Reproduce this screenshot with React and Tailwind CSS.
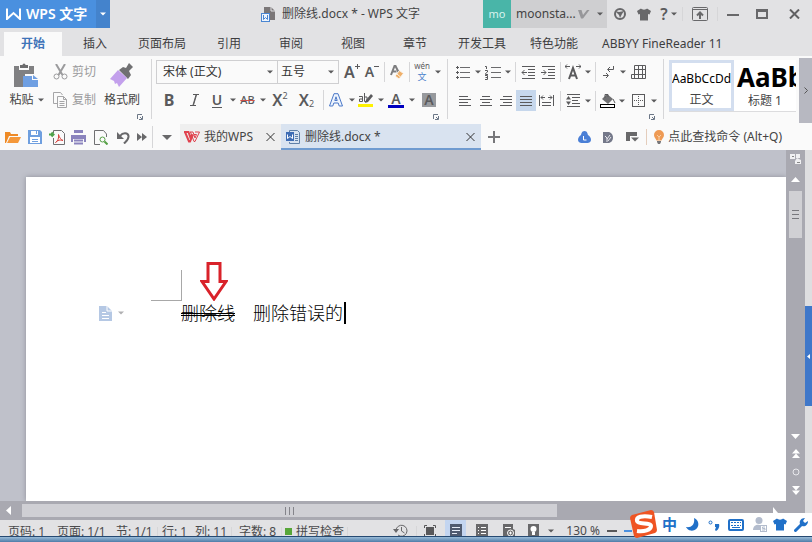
import { useState } from 'react'

const TABS = ['插入', '页面布局', '引用', '审阅', '视图', '章节', '开发工具', '特色功能']

function Svg({ w = 16, h = 16, className = '', children }) {
  return (
    <svg width={w} height={h} viewBox={`0 0 ${w} ${h}`} fill="none" className={`shrink-0 ${className}`} aria-hidden="true">
      {children}
    </svg>
  )
}

function Caret({ className = 'text-[#5a5a5c]' }) {
  return (
    <Svg w={6} h={4} className={className}>
      <path d="M0 0.5h6L3 3.5z" fill="currentColor" />
    </Svg>
  )
}

function Tool({ label, className = 'w-5', children }) {
  return (
    <button type="button" aria-label={label} title={label} className={`flex h-[21px] shrink-0 items-center justify-center text-[#5a5a5c] ${className}`}>
      {children}
    </button>
  )
}

function Drop({ label, className = 'w-[11px]' }) {
  return (
    <Tool label={`${label}选项`} className={className}>
      <Caret />
    </Tool>
  )
}

function Sep({ className = 'h-5' }) {
  return <div className={`w-px shrink-0 bg-[#d6d6d8] ${className}`} />
}

function Launcher({ label }) {
  return (
    <button type="button" aria-label={label} className="mr-2 flex h-[6px] shrink-0 items-center self-end">
      <Svg w={6} h={6}>
        <path d="M0.5 5V0.5H5M5.5 2v3.5H2M3 3l2 2" stroke="#6b7686" />
      </Svg>
    </button>
  )
}

function Lines({ rows }) {
  return (
    <Svg w={14} h={12}>
      {rows.map(([x, w], i) => (
        <rect key={i} x={x} y={1 + i * 3} width={w} height="1" fill="#5a5a5c" />
      ))}
    </Svg>
  )
}

function Shirt({ className }) {
  return (
    <Svg w={14} h={13} className={className}>
      <path d="M4 0.5C5 2 9 2 10 0.5L14 3l-1.500 3.500L11 6v6.500H3V6l-1.500 0.500L0 3z" fill="currentColor" />
    </Svg>
  )
}

function TitleBar() {
  return (
    <header className="flex h-7 shrink-0 items-center">
      <button type="button" className="flex h-full w-24 shrink-0 items-center bg-[#4a90df] pl-[6px] text-sm font-semibold whitespace-nowrap text-white">
        <Svg w={15} h={12} className="mr-[5px]">
          <path d="M1 0.500V11L7.500 5L14 11V0.500" stroke="white" strokeWidth="2" />
        </Svg>
        WPS 文字
      </button>
      <button type="button" aria-label="主菜单" className="flex h-full w-[14px] shrink-0 items-center justify-center bg-[#4483cc]">
        <Caret className="text-white" />
      </button>
      <div className="mr-[63px] ml-auto flex items-center gap-[6px] text-xs whitespace-nowrap text-[#444]">
        <Svg w={15} h={15}>
          <path d="M3 0h7l4 4v9H3z" fill="#7b7778" />
          <path d="M10 0v4h4" stroke="#e2e2e4" />
          <rect x="0.5" y="6.500" width="8" height="8" fill="#eef4fc" stroke="#4a86d2" />
          <path d="M2.500 8v4.500l2-2 2 2V8" stroke="#4a86d2" />
        </Svg>
        删除线.docx * - WPS 文字
      </div>
      <div className="flex h-full w-7 shrink-0 items-center justify-center bg-[#49b5a8] text-[11px] text-[#d8f3ee]">mo</div>
      <button type="button" className="flex h-full w-24 shrink-0 items-center bg-[#cfcfd1] pl-[5px] text-xs text-[#444]">
        moonsta...
        <Svg w={12} h={10} className="ml-[2px]">
          <path d="M0 1h3.500L5 6l4-5h2.500L5 9.500H3z" fill="#97979a" />
        </Svg>
        <span className="mr-[2px] ml-auto w-2"><Caret /></span>
      </button>
      <Tool label="浏览器" className="w-[26px]">
        <Svg w={12} h={12}>
          <circle cx="6" cy="6" r="5" stroke="#68686a" strokeWidth="2" />
          <path d="M1 3l4 1 5-1-2 3-2 4-1-3z" fill="#68686a" />
        </Svg>
      </Tool>
      <Tool label="皮肤" className="w-[22px]"><Shirt className="text-[#68686a]" /></Tool>
      <Tool label="帮助" className="w-[27px]">
        <span className="mr-[3px] text-base font-semibold">?</span>
        <Caret />
      </Tool>
      <Sep className="h-[14px] bg-[#b8b8ba]" />
      <Tool label="隐藏功能区" className="w-[34px]">
        <Svg w={16} h={14}>
          <rect x="0.5" y="0.5" width="15" height="13" rx="1" stroke="#68686a" />
          <path d="M1 2.500h14" stroke="#68686a" />
          <path d="M8 12V6M5 8.500l3-3 3 3" stroke="#68686a" strokeWidth="2" />
        </Svg>
      </Tool>
      <Sep className="h-[14px] bg-[#b8b8ba]" />
      <Tool label="最小化" className="w-[30px]"><Svg w={12} h={4}><rect y="2" width="12" height="2" fill="#68686a" /></Svg></Tool>
      <Tool label="最大化" className="w-7"><Svg w={12} h={10}><path d="M1 2v7h10V2z" stroke="#68686a" strokeWidth="2" /><path d="M0 1.500h12" stroke="#68686a" strokeWidth="3" /></Svg></Tool>
      <Tool label="关闭" className="w-9"><Svg w={11} h={10}><path d="M1 0.500l9 9M10 0.500l-9 9" stroke="#606062" strokeWidth="2" /></Svg></Tool>
    </header>
  )
}

function MenuTabs() {
  return (
    <nav className="flex h-7 shrink-0 items-end text-xs text-[#3d3d3f]">
      <button type="button" className="mr-[2px] ml-1 h-6 w-[58px] shrink-0 bg-[#fafafa] font-semibold text-[#3f74b8]">开始</button>
      {TABS.map((t) => (
        <button type="button" key={t} className={`h-6 shrink-0 ${t.length > 2 ? 'w-[72px]' : 'w-[62px]'}`}>{t}</button>
      ))}
      <button type="button" className="h-6 shrink-0 px-3 whitespace-nowrap">ABBYY FineReader 11</button>
    </nav>
  )
}

function Clipboard() {
  return (
    <section className="flex h-full w-[151px] shrink-0 flex-col">
      <div className="flex h-14 text-xs text-[#444]">
        <button type="button" className="flex w-[53px] flex-col items-center pt-[5px]">
          <Svg w={25} h={25}>
            <path d="M0 3h5v4h10V3h5v8h-9v13H0z" fill="#808082" />
            <path d="M6 2h2.500a1.500 1.500 0 0 1 3 0H14v3H6z" fill="#6c6c6e" />
            <path d="M9 13h9v4h6v7H9z" fill="#6f9fe2" />
            <path d="M19 12l5 4h-5z" fill="#6f9fe2" />
          </Svg>
          <span className="mt-1 flex items-center gap-1 whitespace-nowrap">粘贴<Caret /></span>
        </button>
        <div className="flex w-[47px] flex-col text-[#9a9a9c]">
          <button type="button" className="flex h-7 items-center gap-[3px] whitespace-nowrap">
            <Svg w={16} h={16}>
              <path d="M3 0l6.500 11M12 0L5.500 11" stroke="#9b9b9d" strokeWidth="2" />
              <circle cx="3.500" cy="12.500" r="2.500" stroke="#9b9b9d" />
              <circle cx="11.500" cy="12.500" r="2.500" stroke="#9b9b9d" />
            </Svg>
            剪切
          </button>
          <button type="button" className="flex h-7 items-center gap-[3px] whitespace-nowrap">
            <Svg w={16} h={16}>
              <path d="M4 11.500H0.500V0.500h7L9.500 3" stroke="#a5a5a7" />
              <path d="M4.500 4.500h6l3 3v8h-9z" stroke="#a5a5a7" />
              <path d="M10.500 4.500v3h3M6.500 9.500h5M6.500 11.500h5M6.500 13.500h5" stroke="#a5a5a7" />
            </Svg>
            复制
          </button>
        </div>
        <button type="button" className="flex w-11 flex-col items-center pt-[5px]">
          <Svg w={24} h={25}>
            <path d="M19 0l4 4-4 4 2 4-3 4L9 7l4-3 3 1z" fill="#707072" />
            <path d="M8 7l9 8-8 9-2-4-2 1-1-3-4-2z" fill="#c3a0ec" />
          </Svg>
          <span className="mt-1 whitespace-nowrap">格式刷</span>
        </button>
      </div>
      <Launcher label="剪贴板" />
    </section>
  )
}

function FontGroup() {
  return (
    <section className="flex h-full w-[295px] shrink-0 flex-col text-xs">
      <div className="flex h-7 items-center pl-1">
        <div className="flex h-6 w-[122px] shrink-0 items-center border border-[#cfcfd1] pr-1 pl-[6px]">
          <select aria-label="字体" className="min-w-0 flex-1 appearance-none text-[#333]"><option>宋体 (正文)</option></select>
          <Caret />
        </div>
        <div className="-ml-px flex h-6 w-[62px] shrink-0 items-center border border-[#cfcfd1] pr-1 pl-[3px]">
          <select aria-label="字号" className="min-w-0 flex-1 appearance-none text-[#333]"><option>五号</option></select>
          <Caret />
        </div>
        <Tool label="增大字号" className="ml-[3px] w-5"><span className="text-base font-semibold">A</span><Svg w={5} h={5} className="mb-3"><path d="M2.500 0v5M0 2.500h5" stroke="#5a5a5c" /></Svg></Tool>
        <Tool label="减小字号"><span className="text-sm font-semibold">A</span><Svg w={5} h={5} className="mb-3"><path d="M0 2.500h5" stroke="#5a5a5c" /></Svg></Tool>
        <Sep className="mx-[2px] h-5" />
        <Tool label="清除格式">
          <Svg w={14} h={16}>
            <path d="M1 11L4.500 2h1L9 9M2.500 7.500h4" stroke="#7d7d7f" strokeWidth="2" />
            <path d="M9.500 6.500l4 3-4.500 5.500-4-3z" fill="#efb06b" stroke="#faf6f0" />
            <path d="M7 10l3.500 3" stroke="#fff3e0" />
          </Svg>
        </Tool>
        <Sep className="mx-[2px] h-5" />
        <Tool label="拼音指南">
          <span className="flex flex-col items-center">
            <span className="text-[8px] leading-[10px]">wén</span>
            <span className="text-[9px] leading-[12px] text-[#4b83cc]">文</span>
          </span>
        </Tool>
        <Drop label="拼音指南" />
      </div>
      <div className="flex h-7 items-center pl-1">
        <Tool label="加粗" className="w-[26px]"><span className="text-base font-bold">B</span></Tool>
        <Tool label="倾斜" className="w-[25px]"><Svg w={9} h={12}><path d="M3 0.500h6M0 11.500h6M6 1L3 11" stroke="#5a5a5c" /><path d="M6.500 1L3.500 11" stroke="#5a5a5c" /></Svg></Tool>
        <Tool label="下划线"><span className="border-b border-[#5a5a5c] text-sm leading-[14px] font-semibold">U</span></Tool>
        <Drop label="下划线" />
        <Tool label="删除线" className="w-[19px]"><span className="text-[11px] font-medium line-through decoration-[#d0504a] decoration-1">AB</span></Tool>
        <Drop label="删除线" />
        <Tool label="上标" className="w-6"><span className="text-base font-semibold">X</span><span className="mb-2 text-[9px]">2</span></Tool>
        <Tool label="下标" className="w-[29px]"><span className="text-base font-semibold">X</span><span className="mt-2 text-[9px]">2</span></Tool>
        <Sep className="mx-[2px] h-5" />
        <Tool label="文字效果">
          <Svg w={14} h={14}>
            <path d="M0.500 13L5 0.700h4L13.500 13h-3.300l-1-3H4.800l-1 3zM5.800 7.500h2.400L7 3.800z" stroke="#4b78c8" fill="#eef4fd" />
          </Svg>
        </Tool>
        <Drop label="文字效果" />
        <Tool label="突出显示" className="w-[18px]">
          <Svg w={16} h={15}>
            <path d="M1 3.500h3.500v5H1.500V6H4M6.500 0v8.500H9v-4.500H6.500" stroke="#5a5a5c" />
            <path d="M13 1l2 2-5 6-3 1 1-3z" fill="#5a5a5c" />
            <rect y="11" width="15" height="3" fill="#fff200" />
          </Svg>
        </Tool>
        <Drop label="突出显示" />
        <Tool label="字体颜色">
          <span className="border-b-3 border-[#0000c0] px-[3px] text-sm leading-[13px] font-semibold">A</span>
        </Tool>
        <Drop label="字体颜色" />
        <Tool label="字符底纹" className="w-6"><span className="w-[14px] bg-[#97999d] text-sm leading-[14px] font-semibold">A</span></Tool>
      </div>
      <Launcher label="字体" />
    </section>
  )
}

function ParagraphGroup() {
  return (
    <section className="flex h-full w-[215px] shrink-0 flex-col">
      <div className="flex h-7 items-center">
        <Tool label="项目符号" className="ml-[5px] w-5">
          <Svg w={14} h={13}><path d="M4 1.500h10M4 6.500h10M4 11.500h10" stroke="#6b6b6d" /><path d="M0 1.500h3M1.500 0v3M0 6.500h3M1.500 5v3M0 11.500h3M1.500 10v3" stroke="#5a5a5c" /></Svg>
        </Tool>
        <Drop label="项目符号" className="w-[10px]" />
        <Tool label="编号">
          <Svg w={16} h={15}>
            <path d="M6 2.500h10M6 7.500h10M6 12.500h10" stroke="#6b6b6d" />
            <path d="M0 1.500h1.500V4M0 5.500h2.500v1.500L0.500 8.500v1H3M0 10.500h2.500v4H0M0.500 12.500h2" stroke="#5a5a5c" />
          </Svg>
        </Tool>
        <Drop label="编号" className="w-[9px]" />
        <Sep className="mr-[2px] ml-[3px] h-5" />
        <Tool label="减少缩进"><Svg w={14} h={13}><path d="M1 0.500h13M7 3.500h7M7 6.500h7M7 9.500h7M1 12.500h13M1 6.500h5M3.500 4L1 6.500 3.500 9" stroke="#5a5a5c" /></Svg></Tool>
        <Tool label="增加缩进"><Svg w={14} h={13}><path d="M1 0.500h13M7 3.500h7M7 6.500h7M7 9.500h7M1 12.500h13M0 6.500h5M2.500 4L5 6.500 2.500 9" stroke="#5a5a5c" /></Svg></Tool>
        <Sep className="mx-[2px] h-5" />
        <Tool label="字符缩放">
          <Svg w={16} h={16}>
            <path d="M4 15L8 4l4 11M5.500 11.500h5" stroke="#5a5a5c" strokeWidth="2" />
            <path d="M0 2.500h5M2 0.500L0 2.500l2 2M11 2.500h5M14 0.500l2 2-2 2" stroke="#5a5a5c" />
          </Svg>
        </Tool>
        <Drop label="字符缩放" className="w-[9px]" />
        <Sep className="mx-[3px] h-5" />
        <Tool label="换行符">
          <Svg w={12} h={13}><path d="M10.500 0v3.500H5M7 1L4.500 3.500 7 6M0 9.500h5M3 7l2.500 2.500L3 12" stroke="#5a5a5c" /></Svg>
        </Tool>
        <Drop label="换行符" className="w-2" />
        <Tool label="插入表格" className="w-[22px]">
          <Svg w={15} h={14}><path d="M3.500 0.500h11v13H0.500V9.500h3zM3.500 4.500h11M1 9.500h13M7.500 0v14M11.500 0v14M3.500 9v4" stroke="#5a5a5c" /></Svg>
        </Tool>
      </div>
      <div className="flex h-7 items-center pt-px">
        <Tool label="左对齐" className="ml-[6px] w-[21px]"><Lines rows={[[1, 9], [1, 12], [1, 9], [1, 12]]} /></Tool>
        <Tool label="居中" className="w-[21px]"><Lines rows={[[3, 8], [1, 12], [3, 8], [1, 12]]} /></Tool>
        <Tool label="右对齐" className="w-5"><Lines rows={[[4, 9], [1, 12], [4, 9], [1, 12]]} /></Tool>
        <Tool label="两端对齐" className="w-5 bg-[#c6d7ec]"><Lines rows={[[1, 12], [1, 12], [1, 12], [1, 12]]} /></Tool>
        <Tool label="分散对齐"><Svg w={15} h={13}><path d="M0.500 1v11M14.500 1v11M2 3.500h4M9 3.500h4M4 1.500l-2 2 2 2M11 1.500l2 2-2 2M3 8.500h9M3 11.500h9" stroke="#5a5a5c" /></Svg></Tool>
        <Sep className="mr-[2px] ml-1 h-5" />
        <Tool label="行距">
          <Svg w={14} h={14}><path d="M6 3.500h8M6 6.500h6M6 9.500h8M1 12.500h13M1 0.500h13" stroke="#5a5a5c" /><path d="M2.500 2L5 5.500H0zM2.500 11L5 7.500H0z" fill="#5a5a5c" /></Svg>
        </Tool>
        <Drop label="行距" className="w-[9px]" />
        <Sep className="mx-[3px] h-5" />
        <Tool label="底纹颜色" className="w-[18px]">
          <Svg w={16} h={15}>
            <path d="M7 1l6 5-5 5-6-5z" fill="#707072" />
            <path d="M5 5V1.500h3V4M13 6l2 4" stroke="#5a5a5c" />
            <rect x="0.5" y="11.500" width="14" height="3" fill="white" stroke="black" />
          </Svg>
        </Tool>
        <Drop label="底纹颜色" className="w-[10px]" />
        <Tool label="边框" className="w-[22px]">
          <Svg w={13} h={13}><rect x="0.5" y="0.5" width="12" height="12" stroke="#5a5a5c" /><path d="M6.500 2v10M2 6.500h10" stroke="#5a5a5c" strokeDasharray="1 1" /></Svg>
        </Tool>
        <Drop label="边框" className="w-[9px]" />
      </div>
      <Launcher label="段落" />
    </section>
  )
}

function Ribbon() {
  return (
    <div className="flex h-[67px] shrink-0 bg-[#fafafa] pt-[2px]">
      <Clipboard />
      <Sep className="mt-px h-[60px]" />
      <FontGroup />
      <Sep className="mt-px h-[60px]" />
      <ParagraphGroup />
      <Sep className="mt-px h-[60px]" />
      <div className="mt-[2px] ml-[5px] flex h-[52px] min-w-0 flex-1 overflow-hidden border-b border-[#dcdcde]">
        <button type="button" className="flex w-[65px] shrink-0 flex-col items-center overflow-hidden border-3 border-[#d3deef] bg-white text-xs text-[#444]">
          <span className="mt-2 text-xs leading-4 text-black">AaBbCcDd</span>
          <span className="mt-[5px] leading-4">正文</span>
        </button>
        <button type="button" className="flex w-[62px] shrink-0 flex-col items-center overflow-hidden bg-white text-xs text-[#444]">
          <span className="mt-px ml-[3px] self-start text-[26px] leading-8 font-bold text-black">AaBb</span>
          <span className="leading-4">标题 1</span>
        </button>
      </div>
      <button type="button" aria-label="更多样式" className="ml-[3px] flex w-[13px] shrink-0 items-center justify-center bg-[#b7b8c1]">
        <Svg w={4} h={7}><path d="M0.500 0.500l3 3-3 3" stroke="#555" /></Svg>
      </button>
    </div>
  )
}

function QuickBar() {
  return (
    <div className="flex h-[27px] shrink-0 items-center bg-[#fafafa] pt-px text-xs text-[#444]">
      <Tool label="打开" className="ml-px w-[23px]">
        <Svg w={16} h={13}><path d="M0 1h5l1 2h7v2H4L1 12H0z" fill="#ee8a26" /><path d="M5 6h11l-3 6H2z" fill="#f5983a" /></Svg>
      </Tool>
      <Tool label="保存" className="w-[22px]">
        <Svg w={14} h={14}><path d="M0 0h12l2 2v12H0z" fill="#6f9fdf" /><rect x="3" y="1" width="7" height="4" fill="white" /><rect x="2" y="7" width="10" height="6" fill="white" /><path d="M4 9.500h6M4 11.500h6M8.500 1v3" stroke="#6f9fdf" /></Svg>
      </Tool>
      <Tool label="输出为PDF" className="w-[22px]">
        <Svg w={16} h={15}>
          <path d="M4.500 3V0.500h8l3 3v11h-11V8" stroke="#707072" />
          <path d="M0 4.500h4M2.500 2.500l2 2-2 2" stroke="#4ea24a" strokeWidth="2" />
          <path d="M6.500 12.500C9 11 10 8 9.500 4.500 10.500 8 12 9.500 14 10.500 11 9.500 9 10 6.500 12.500z" stroke="#d8433f" />
        </Svg>
      </Tool>
      <Tool label="打印" className="w-[21px]">
        <Svg w={15} h={15}><path d="M3 0h9v3H3zM0 5h15v7h-2V9H2v3H0z" fill="#8a83bd" /><path d="M3 10.500h9M3 13.500h9" stroke="#8a83bd" strokeWidth="2" /></Svg>
      </Tool>
      <Tool label="打印预览" className="w-6">
        <Svg w={14} h={15}><path d="M12.500 7V4l-3-3.500h-9v14H6" stroke="#707072" /><circle cx="8.500" cy="9.500" r="2.500" stroke="#56a046" /><path d="M10.500 11.500l3 3" stroke="#56a046" strokeWidth="2" /></Svg>
      </Tool>
      <Tool label="撤销">
        <Svg w={13} h={13}><path d="M3 5C6 1 11 1.500 11.500 5S9 10.500 7 12.500" stroke="#68686a" strokeWidth="2" /><path d="M0 1v7h7z" fill="#68686a" /></Svg>
      </Tool>
      <Tool label="更多" className="w-[18px]"><Svg w={10} h={8}><path d="M0 0l5 4-5 4zM5 0l5 4-5 4z" fill="#68686a" /></Svg></Tool>
      <Sep className="mx-px h-[22px]" />
      <Tool label="文档列表" className="w-[26px]"><Svg w={10} h={5}><path d="M0 0h10L5 5z" fill="#68686a" /></Svg></Tool>
      <div className="flex h-full w-[101px] shrink-0 items-center bg-[#efefef] pl-1">
        <Svg w={16} h={12} className="mr-1">
          <path d="M0 1h4.500l2 6L8 3.500M1 1l4 9.500h1L9 3.500" stroke="#e0424e" strokeWidth="2" />
          <path d="M6 1h3l2 6 1.500-3.500H10M15.500 1L11 10.500h-1L6.500 1M11 1h4.500" stroke="#e0424e" />
        </Svg>
        <button type="button">我的WPS</button>
        <button type="button" aria-label="关闭我的WPS" className="mr-[6px] ml-auto"><Svg w={9} h={8}><path d="M0.500 0l8 8M8.500 0l-8 8" stroke="#333" /></Svg></button>
      </div>
      <div className="flex h-full w-[200px] shrink-0 items-center border-b-2 border-[#6f9bd0] bg-[#d9e3f0] pt-[2px] pl-[5px]">
        <Svg w={14} h={14} className="mr-[5px]">
          <path d="M3.500 2V0.500h8l2 2v11h-10V12M9 4.500h3M9 6.500h3M9 8.500h3M9 10.500h3" stroke="#6080a8" />
          <rect y="2" width="8" height="9" fill="#3e6cb4" />
          <path d="M1.500 4.500v4l2.500-2 2.500 2v-4" stroke="white" />
        </Svg>
        <button type="button">删除线.docx *</button>
        <button type="button" aria-label="关闭文档" className="mr-[6px] ml-auto"><Svg w={9} h={8}><path d="M0.500 0l8 8M8.500 0l-8 8" stroke="#333" /></Svg></button>
      </div>
      <Tool label="新建" className="w-[26px]"><Svg w={12} h={12}><path d="M6 0v12M0 6h12" stroke="#77777a" strokeWidth="2" /></Svg></Tool>
      <div className="ml-auto flex items-center">
        <Tool label="云服务" className="w-6"><Svg w={13} h={12}><path d="M6.500 0c3 0 3 3 3.500 4 2 1 3 3 3 5s-2 3-3.500 3h-6C2 12 0 11 0 9s1-4 3-5c0.500-1 0.500-4 3.500-4z" fill="#4a7fd6" /><path d="M5.500 5v4h3" stroke="white" /></Svg></Tool>
        <Tool label="文档助手" className="w-6"><Svg w={10} h={11}><path d="M0 0h5c3 0 5 2.500 5 5.500S8 11 5 11H0z" fill="#747889" /><path d="M4 10V6L2 4M4 7l3-4M5 9l3-4" stroke="#e8e8ee" /></Svg></Tool>
        <Tool label="切换窗口" className="w-6"><Svg w={13} h={11}><path d="M0 0h11v4H4v5H0z" fill="#68686a" /><path d="M5 5.500h8l-4 4z" fill="#68686a" /></Svg></Tool>
        <Sep className="mr-[6px] ml-[2px] h-4 bg-[#e4cdbc]" />
        <Svg w={12} h={14} className="mr-[3px]"><path d="M6 0a5 5 0 0 1 5 5c0 2.500-2 3.500-2.500 5.500h-5C3 8.500 1 7.500 1 5a5 5 0 0 1 5-5z" fill="#ee9a54" /><path d="M4 5l2 2 2-2M6 7v3" stroke="#f8cfa4" /><path d="M4 11h4v1L7 14H5l-1-2z" fill="#77777a" /></Svg>
        <button type="button" className="mr-[30px] whitespace-nowrap">点此查找命令 (Alt+Q)</button>
      </div>
    </div>
  )
}

function Page() {
  return (
    <div className="mt-[27px] ml-[26px] flex min-w-0 flex-1 flex-col bg-white pt-[85px] shadow-[0_0_5px_#8f9099]">
      <div className="flex items-end pl-[125px]">
        <div className="h-[31px] w-[31px] border-r border-b border-[#a8a8a8]" />
        <Svg w={28} h={39} className="ml-[18px]">
          <path d="M8 1.500h12v18h6L14 37 2 19.500h6z" stroke="#d9222a" strokeWidth="3" />
        </Svg>
      </div>
      <div className="flex h-6 items-center pl-[72px]">
        <Tool label="粘贴选项" className="w-[14px]">
          <Svg w={13} h={15}><path d="M0 0h8l5 5v10H0z" fill="#b5c8e4" /><path d="M8 0v5h5M3 6.500h4M3 9.500h7M3 12.500h7" stroke="white" /></Svg>
        </Tool>
        <span className="ml-[6px] flex w-[63px]"><Caret className="text-[#b0b0b2]" /></span>
        <p className="flex items-center text-lg leading-[22px] font-light whitespace-pre text-black">
          <s className="decoration-black decoration-double decoration-1">删除线</s>
          <span className="border-r-2 border-black pr-px pl-[18px]">删除错误的</span>
        </p>
      </div>
    </div>
  )
}

function VerticalScroll() {
  return (
    <div className="flex w-[19px] shrink-0 flex-col items-center bg-[#a9a9b1] pt-1">
      <Svg w={12} h={11}><path d="M0 0h5v5H0zM6 0h4v4H6zM7 4l4 2v4H5V7z" fill="#f0f0f2" /><path d="M2 2.500h2M7 8.500h3" stroke="#888" /></Svg>
      <Svg w={9} h={5} className="mt-3"><path d="M0 5h9L4.500 0z" fill="white" /></Svg>
      <div className="mt-[9px] flex h-[47px] w-[13px] items-center justify-center bg-[#d0d0d4]">
        <Svg w={7} h={9}><path d="M0 0.500h7M0 4.500h7M0 8.500h7" stroke="#77777d" /></Svg>
      </div>
      <div className="mt-auto flex flex-col items-center gap-[10px] pb-[6px]">
        <Svg w={9} h={5}><path d="M0 0h9L4.500 5z" fill="white" /></Svg>
        <Svg w={8} h={9}><path d="M0 4.500h8L4 0zM0 9h8L4 4.500z" fill="white" /></Svg>
        <Svg w={8} h={8}><circle cx="4" cy="4" r="3" stroke="#e8e8ec" /></Svg>
        <Svg w={8} h={9}><path d="M0 0h8L4 4.500zM0 4.500h8L4 9z" fill="white" /></Svg>
      </div>
    </div>
  )
}

function HorizontalScroll() {
  return (
    <div className="flex h-[19px] shrink-0 items-center bg-[#a9a9b1] pl-[6px]">
      <Svg w={5} h={9}><path d="M5 0v9L0 4.500z" fill="white" /></Svg>
      <div className="ml-[11px] flex h-[13px] w-[67%] items-center justify-center bg-[#cfcfd4]">
        <Svg w={10} h={8}><path d="M0.500 0v8M4.500 0v8M8.500 0v8" stroke="#84848a" /></Svg>
      </div>
      <Svg w={7} h={8} className="mr-[25px] ml-auto"><path d="M0 0v7l5-1z" fill="white" /></Svg>
    </div>
  )
}

function StatusBar() {
  const bar = <Sep className="h-[10px] bg-[#a5a5a7]" />
  return (
    <footer className="flex h-4 shrink-0 items-start overflow-hidden bg-[#e2e2e4] text-xs text-[#4a4a4c]">
      <div className="flex shrink-0 items-center pt-[3px] pl-2 leading-[17px] whitespace-nowrap">
        <span className="w-[49px]">页码: 1</span>
        <span className="w-[59px]">页面: 1/1</span>
        <span className="w-[41px]">节: 1/1</span>
        {bar}
        <span className="ml-1 w-[33px]">行: 1</span>
        <span className="w-9">列: 11</span>
        {bar}
        <span className="ml-[7px] w-[42px]">字数: 8</span>
        {bar}
        <span className="mr-1 ml-[3px] h-[7px] w-[7px] bg-[#57a639]" />
        <span className="mr-[3px]">拼写检查</span>
        {bar}
      </div>
      <div className="mr-[180px] ml-auto flex shrink-0 items-center leading-[21px] whitespace-nowrap">
        <Tool label="历史版本" className="w-6"><Svg w={15} h={13}><path d="M3 6.500a5.500 5.500 0 1 1 2 4.500M8.500 3v4l3 2" stroke="#68686a" /><path d="M0 5h6L3 9z" fill="#68686a" /></Svg></Tool>
        <span className="mx-1">{bar}</span>
        <Tool label="全屏显示" className="w-[17px]"><Svg w={12} h={12}><path d="M0.500 3V0.500H3M9 0.500h2.500V3M0.500 9v2.500H3M9 11.500h2.500V9" stroke="#58585a" /><rect x="2" y="2" width="8" height="8" fill="#58585a" /></Svg></Tool>
        <Tool label="页面视图" className="ml-[7px] w-[21px] bg-[#c3d5f0]"><Svg w={12} h={13}><rect width="12" height="13" fill="#4f5b70" /><path d="M2 3.500h8M2 6.500h8M2 9.500h5" stroke="#e6edf8" /></Svg></Tool>
        <Tool label="大纲视图" className="ml-1 w-6"><Svg w={12} h={13}><rect width="12" height="13" fill="#68686a" /><path d="M2 3.500h1M5 3.500h5M2 6.500h1M5 6.500h5M2 9.500h1M5 9.500h5" stroke="white" /></Svg></Tool>
        <Tool label="网页视图" className="ml-[3px] w-6"><Svg w={12} h={13}><path d="M0 0h10v5l2 1v7H0z" fill="#68686a" /><path d="M2 3.500h6" stroke="white" /><circle cx="7.500" cy="9" r="3" stroke="white" /><path d="M6 9h3M7.500 7.500v3" stroke="white" /></Svg></Tool>
        <Tool label="护眼模式" className="w-6"><Svg w={11} h={13}><rect width="11" height="13" fill="#68686a" /><circle cx="5.500" cy="5" r="3" fill="white" /><rect x="4" y="8" width="3" height="3" fill="white" /></Svg></Tool>
        <Drop label="显示模式" />
        <button type="button" className="mr-[6px] ml-[10px]">130 %</button>
        <Tool label="缩小" className="w-[11px]"><Svg w={10} h={2}><rect width="10" height="2" fill="#58585a" /></Svg></Tool>
        <Svg w={8} h={2} className="ml-[7px]"><rect width="8" height="2" fill="#4a90df" /></Svg>
      </div>
    </footer>
  )
}

function InputMethodBar() {
  return (
    <div className="absolute right-0 bottom-[6px] flex h-[23px] items-center rounded-l bg-white text-[#2070c8]">
      <Svg w={30} h={30} className="-ml-3 mb-[2px]">
        <path d="M4 6L23 1q2 0 3 2l3 18q0 2-2 3L9 29q-2 0-3-2L2 9q0-2 2-3z" fill="#ef5423" />
        <path d="M24 8C14 6 8 8 9 12s14 1 14 5-7 6-14 5" stroke="white" strokeWidth="4" />
      </Svg>
      <button type="button" className="w-[23px] text-[15px] font-bold">中</button>
      <Tool label="全半角" className="w-[22px]"><Svg w={13} h={13}><path d="M8 0a6.500 6.500 0 1 1-8 9C6 10 9 6 8 0z" fill="#2070c8" /></Svg></Tool>
      <Tool label="中英文标点" className="w-[21px]"><Svg w={12} h={12}><circle cx="2.500" cy="3.500" r="1.500" stroke="#2070c8" /><path d="M7 5h4c1 3-1 6-3 7l-1-1 1-3H7z" fill="#2070c8" /></Svg></Tool>
      <Tool label="软键盘" className="w-6"><Svg w={16} h={12}><rect x="1" y="1" width="14" height="10" rx="1" stroke="#2070c8" strokeWidth="2" /><path d="M3 3.500h10M3 6.500h10" stroke="#2070c8" strokeDasharray="2 1" /><path d="M4 8.500h8" stroke="#2070c8" /></Svg></Tool>
      <Tool label="账号" className="w-[23px]"><Svg w={14} h={15}><circle cx="6" cy="3.500" r="3.500" fill="#b3bccd" /><path d="M0 13c0-7 10-7 12 0z" fill="#b3bccd" /><rect x="7.500" y="8.500" width="6" height="6" fill="white" stroke="#b3bccd" /><path d="M12 10H9.500v1.500H12V13H9" stroke="#b3bccd" /></Svg></Tool>
      <Tool label="输入法皮肤" className="w-[18px]"><Shirt className="text-[#2070c8]" /></Tool>
      <Tool label="工具箱" className="w-[23px]"><Svg w={14} h={14}><path d="M1.500 12.500L8 6" stroke="#2070c8" strokeWidth="3" strokeLinecap="round" /><path d="M11 0L9 3l2 2 3-2c0 4-3 6-6 5L6 6c-1-3 1-6 5-6z" fill="#2070c8" /></Svg></Tool>
    </div>
  )
}

export default function App() {
  const [open, setOpen] = useState(false)

  return (
    <div className="relative flex h-screen flex-col overflow-hidden bg-[#e2e2e4] font-['Noto_Sans','Noto_Sans_CJK_SC',sans-serif]">
      <TitleBar />
      <MenuTabs />
      <Ribbon />
      <QuickBar />
      <div className="flex min-h-0 flex-1">
        <main className="flex min-w-0 flex-1 flex-col">
          <div className="flex min-h-0 flex-1 overflow-hidden bg-[#bfc1ca]">
            <Page />
            <VerticalScroll />
          </div>
          <HorizontalScroll />
        </main>
        <aside className={`flex shrink-0 flex-col bg-[#dedee0] pt-[156px] ${open ? 'w-40' : 'w-[7px]'}`}>
          <button type="button" aria-label="展开任务窗格" onClick={() => setOpen(!open)} className="flex h-[100px] w-[7px] items-center justify-center bg-[#3f77c9]">
            <Svg w={3} h={5}><path d="M3 0v5L0 2.500z" fill="white" /></Svg>
          </button>
        </aside>
      </div>
      <StatusBar />
      <div className="h-[6px] shrink-0 border-t border-[#264a72] bg-linear-to-b from-[#9bbcd8] to-[#4f7da8]" />
      <InputMethodBar />
    </div>
  )
}
